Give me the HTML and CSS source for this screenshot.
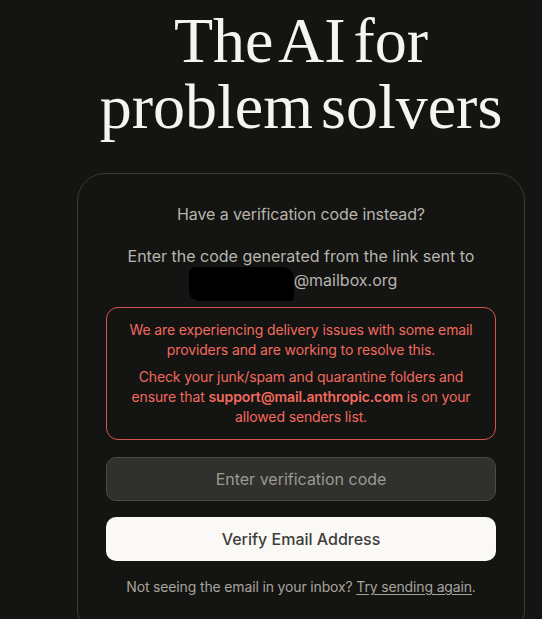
FILE: index.html
```html
<!DOCTYPE html>
<html lang="en">
<head>
<meta charset="utf-8">
<title>Verify</title>
<link rel="stylesheet" href="styles.css">
</head>
<body>
<main class="page">
  <h1 class="title">The AI for<br>problem solvers</h1>
  <section class="card">
    <p class="prompt">Have a verification code instead?</p>
    <p class="sent">Enter the code generated from the link sent to<br><span class="redact"></span>@mailbox.org</p>
    <div class="alert">
      <p>We are experiencing delivery issues with some email providers and are working to resolve this.</p>
      <p>Check your junk/spam and quarantine folders and ensure that <strong>support@mail.anthropic.com</strong> is on your allowed senders list.</p>
    </div>
    <input class="code" type="text" placeholder="Enter verification code">
    <button class="verify" type="button">Verify Email Address</button>
    <p class="resend">Not seeing the email in your inbox? <a href="#">Try sending again</a>.</p>
  </section>
</main>
</body>
</html>
```
FILE: styles.css
```css
* { box-sizing: border-box; }
html, body { margin: 0; padding: 0; }
body {
  background: #141413;
  color: #c2c0b6;
  font-family: "Inter", "Liberation Sans", sans-serif;
  height: 619px;
  overflow: hidden;
}
.page {
  width: 448px;
  margin-left: 77px;
  display: flex;
  flex-direction: column;
  align-items: stretch;
}
.title {
  margin: 8px 0 0 0;
  font-family: "Liberation Serif", serif;
  font-weight: 400;
  font-size: 64px;
  line-height: 66px;
  letter-spacing: 0;
  word-spacing: -8px;
  color: #f5f4ee;
  text-align: center;
}
.card {
  margin-top: 33px;
  width: 100%;
  border: 1px solid #3a3a37;
  border-radius: 28px;
  padding: 28px 28px 40px 28px;
  display: flex;
  flex-direction: column;
  align-items: stretch;
  text-align: center;
}
.prompt {
  margin: 0;
  font-size: 16px;
  line-height: 24px;
  color: #b7b5ad;
  letter-spacing: -0.1px;
}
.sent {
  margin: 18px 0 0 0;
  font-size: 16px;
  line-height: 24px;
  color: #b7b5ad;
}
.redact {
  display: inline-block;
  width: 105px;
  height: 34px;
  margin: -6px 0 -6px -16px;
  background: #000;
  vertical-align: -9px;
  border-radius: 6px 12px 4px 10px;
}
.alert {
  margin-top: 12px;
  border: 1px solid #d4574e;
  border-radius: 12px;
  padding: 12px 16px 12px 16px;
  color: #f26a5e;
  font-size: 14px;
  line-height: 20px;
  letter-spacing: -0.12px;
}
.alert p { margin: 0; }
.alert p + p { margin-top: 7px; }
.alert strong { font-weight: 600; }
.code {
  margin-top: 17px;
  height: 44px;
  width: 100%;
  background: #30302e;
  border: 1px solid #4a4a46;
  border-radius: 10px;
  color: #f5f4ee;
  font-family: inherit;
  font-size: 16px;
  text-align: center;
}
.code::placeholder { color: #9c9a92; }
.verify {
  margin-top: 16px;
  height: 44px;
  width: 100%;
  background: #faf9f5;
  border: none;
  border-radius: 10px;
  color: #3d3d3a;
  font-family: inherit;
  font-size: 16px;
  font-weight: 500;
}
.resend {
  margin: 16px 0 0 0;
  font-size: 14px;
  line-height: 20px;
  color: #a6a49c;
  letter-spacing: -0.15px;
}
.resend a { color: inherit; text-decoration: underline; text-underline-offset: 2px; }
```
